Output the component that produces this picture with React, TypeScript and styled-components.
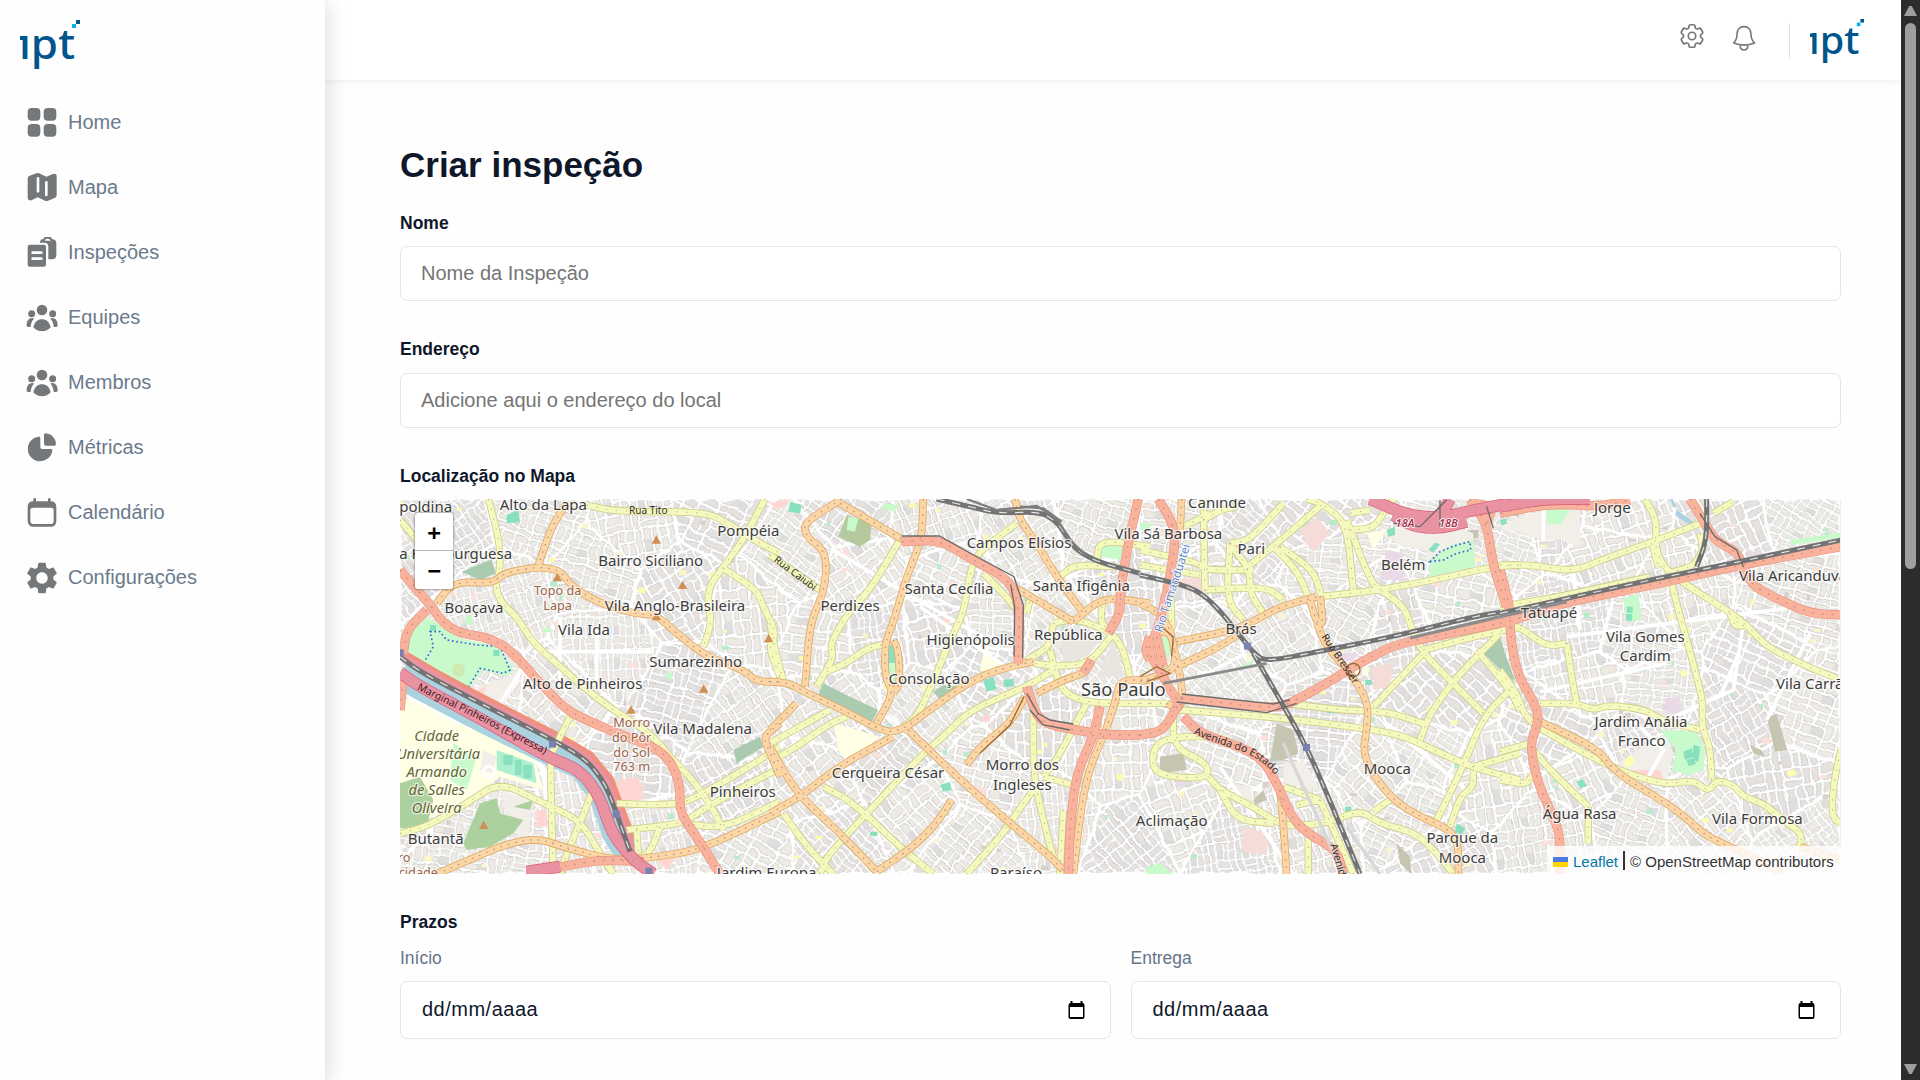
import React from "react";
import styled, { createGlobalStyle } from "styled-components";
import { HiOutlineCog6Tooth } from "react-icons/hi2";
import { MdSettings } from "react-icons/md";

const GlobalStyle = createGlobalStyle`
  * { box-sizing: border-box; }
  body { margin: 0; overflow: hidden; background: #fefefe; font-family: "Liberation Sans", Arial, sans-serif; }
`;

const Page = styled.div`
  display: flex;
  height: 1080px;
  width: 1920px;
  background: #fefefe;
`;
const Sidebar = styled.aside`
  flex: 0 0 325px;
  z-index: 2;
  background: #fefefe;
  box-shadow: 0 4px 22px rgba(0, 0, 0, 0.17);
`;
const SidebarLogo = styled.div`
  height: 90px;
  padding: 20px 0 0 20px;
`;
const Nav = styled.nav`
  display: flex;
  flex-direction: column;
`;
const NavItem = styled.a`
  display: flex;
  align-items: center;
  height: 65px;
  padding-left: 26px;
  gap: 10px;
  font-size: 20px;
  color: #6b7a8c;
`;
const IconBox = styled.span`
  display: flex;
  align-items: center;
  justify-content: center;
  width: 32px;
  height: 32px;
  color: #75787b;
  svg { flex: none; display: block; }
`;
const Column = styled.div`
  flex: 1;
  display: flex;
  flex-direction: column;
  min-width: 0;
`;
const Header = styled.header`
  flex: 0 0 80px;
  display: flex;
  justify-content: flex-end;
  padding-right: 37px;
  background: #fff;
  color: #75787b;
  box-shadow: 0 1px 6px rgba(0, 0, 0, 0.08);
`;
const HeaderIcon = styled.span<{ $top: number; $gap: number }>`
  padding-top: ${(p) => p.$top}px;
  margin-right: ${(p) => p.$gap}px;
  height: 60px;
  svg { display: block; }
`;
const Divider = styled.span`
  width: 1px;
  height: 35px;
  margin: 23px 20px 0 0;
  background: #dfe3e8;
`;
const HeaderLogo = styled.span`
  padding-top: 19px;
`;
const Main = styled.main`
  flex: 1;
  padding: 65px 60px 0 75px;
`;
const Title = styled.h1`
  margin: 0 0 28px;
  font-size: 35px;
  line-height: 40px;
  font-weight: 700;
  color: #0f172a;
`;
const Field = styled.div<{ $after: number; $gap?: number }>`
  display: flex;
  flex-direction: column;
  gap: ${(p) => p.$gap ?? 13}px;
  margin-bottom: ${(p) => p.$after}px;
`;
const Label = styled.label<{ $muted?: boolean }>`
  font-size: 17.5px;
  line-height: 20px;
  font-weight: ${(p) => (p.$muted ? 400 : 700)};
  color: ${(p) => (p.$muted ? "#64748b" : "#0f172a")};
`;
const TextInput = styled.input`
  width: 100%;
  height: 55px;
  padding: 0 20px;
  border: 1px solid #e2e5ec;
  border-radius: 7px;
  background: #fff;
  font: 20px "Liberation Sans", Arial, sans-serif;
  outline: none;
  &::placeholder { color: #757575; opacity: 1; }
`;
const Dates = styled.div`
  display: grid;
  grid-template-columns: 1fr 1fr;
  gap: 20px;
  margin-top: 16px;
`;
const DateBox = styled.div`
  display: flex;
  align-items: center;
  justify-content: space-between;
  height: 58px;
  padding: 0 25px 0 21px;
  border: 1px solid #e2e5ec;
  border-radius: 7px;
  background: #fff;
  font-size: 20px;
  color: #0f172a;
`;
const DateText = styled.span`
  padding-bottom: 2px;
  letter-spacing: 0.5px;
`;
const MapFrame = styled.div`
  position: relative;
  height: 375px;
  overflow: hidden;
  background: #f2efe9;
  & > svg { display: block; }
`;
const ZoomControl = styled.div`
  position: absolute;
  left: 15px;
  top: 14px;
  width: 38px;
  border-radius: 3px;
  overflow: hidden;
  background: #fff;
  box-shadow: 0 0 2px 1px rgba(0, 0, 0, 0.3);
`;
const ZoomButton = styled.div<{ $line?: boolean }>`
  display: flex;
  align-items: center;
  justify-content: center;
  height: 38px;
  padding-top: 1px;
  border-bottom: ${(p) => (p.$line ? "1px solid #bbb" : "0")};
  font: bold 22px "DejaVu Sans Mono", monospace;
  color: #000;
`;
const Attribution = styled.div`
  position: absolute;
  right: 0;
  bottom: 0;
  width: 294px;
  height: 28px;
  display: flex;
  align-items: center;
  padding-left: 6px;
  background: rgba(255, 255, 255, 0.8);
  font-size: 15px;
  color: #333;
  white-space: nowrap;
`;
const LeafletLink = styled.a`
  margin: 3px 0 0 5px;
  color: #0078a8;
`;
const Credit = styled.span`
  margin-top: 3px;
`;
const Bar = styled.span`
  width: 2px;
  height: 19px;
  margin: 0 5px 0 5px;
  background: #333;
`;
const Flag = styled.span`
  width: 15px;
  height: 10px;
  margin-top: 3px;
  background: linear-gradient(#4c7be1 50%, #ffd500 50%);
`;
const Scrollbar = styled.div`
  flex: 0 0 19px;
  z-index: 3;
  display: flex;
  flex-direction: column;
  align-items: center;
  padding: 6px 0;
  background: #2c2c2c;
`;
const Arrow = styled.span<{ $down?: boolean }>`
  width: 13px;
  height: 10px;
  background: #9f9f9f;
  clip-path: ${(p) => (p.$down ? "polygon(0 0, 100% 0, 60% 100%, 40% 100%)" : "polygon(40% 0, 60% 0, 100% 100%, 0 100%)")};
`;
const Thumb = styled.span`
  width: 11px;
  height: 546px;
  margin: 7px 0 auto;
  border-radius: 6px;
  background: #9f9f9f;
`;
const LogoSvg = styled.svg`
  display: block;
  overflow: visible;
`;

function Logo({ width }: { width: number }) {
  return (
    <LogoSvg width={width} height={(width * 46) / 60} viewBox="0 0 60 46">
      <g fill="#00558c">
        <text transform="translate(-1 38.7) scale(1 0.96)" fontFamily="Noto Sans, sans-serif" fontSize="43" fontWeight="500" textLength="56" lengthAdjust="spacingAndGlyphs">ıpt</text>
        <rect x="0" y="16" width="6" height="4" />
        <rect x="56" y="0" width="4" height="4" />
      </g>
      <rect x="52" y="4" width="4" height="4" fill="#00b5e2" />
    </LogoSvg>
  );
}

const NavGlyph = ({ y, children }: { y: number; children: React.ReactNode }) => (
  <svg width="32" height="32" viewBox={`79 ${y} 96 96`} fill="currentColor">{children}</svg>
);

const People = () => (
  <NavGlyph y={34}>
    <circle cx="127" cy="58" r="16" />
    <circle cx="96" cy="69" r="10.5" />
    <circle cx="159" cy="69" r="10.5" />
    <path d="M101 110C105 93 115 86 127 86s22 7 26 24c-7 8-16 12-26 12s-19-4-26-12z" />
    <path d="M81 107c-1-16 6-25 17-25 3 0 5 1 4 3-5 6-8 13-9 23-1 2-11 1-12-1z" />
    <path d="M174 107c1-16-6-25-17-25-3 0-5 1-4 3 5 6 8 13 9 23 1 2 11 1 12-1z" />
  </NavGlyph>
);

const navItems = [
  {
    label: "Home",
    icon: (
      <NavGlyph y={318}>
        {[[84, 321], [132, 321], [84, 369], [132, 369]].map(([x, y]) => <rect key={`${x}${y}`} x={x} y={y} width="38" height="38" rx="12" />)}
      </NavGlyph>
    ),
  },
  {
    label: "Mapa",
    icon: (
      <NavGlyph y={514}>
        <path fillRule="evenodd" d="M84 533q0-6 6-8l20-7q4-2 8 0l22 10 20-8q11-3 11 6v58q0 6-6 8l-20 8q-5 2-9 0l-22-10-19 9q-11 2-11-7zM111 533v39q0 4 4 4t4-4v-39q0-4-4-4t-4 4zM136 545v38q0 4 4 4t4-4v-38q0-4-4-4t-4 4z" />
      </NavGlyph>
    ),
  },
  {
    label: "Inspeções",
    icon: (
      <NavGlyph y={709}>
        <path fillRule="evenodd" d="M90 732h43q6 0 6 6v54q0 6-6 6H90q-6 0-6-6v-54q0-6 6-6zM99 752q-4 0-4 4t4 4h26q4 0 4-4t-4-4zM99 770q-4 0-4 4t4 4h26q4 0 4-4t-4-4z" />
        <path fillRule="evenodd" d="M120 726q2-10 11-11 2-7 9-7h8q7 0 9 7 13 1 13 13v35q0 13-13 13h-11v-38q0-12-12-12zM136 720h17q-2-6-6-6h-6q-4 0-5 6z" />
      </NavGlyph>
    ),
  },
  { label: "Equipes", icon: <People /> },
  { label: "Membros", icon: <People /> },
  {
    label: "Métricas",
    icon: (
      <NavGlyph y={424}>
        <path d="M117 438q5-1 5 5v27q0 5 5 5h27q5 0 4 6a37 37 0 1 1-41-43zM133 433q0-5 5-5 28 3 31 32 0 5-5 5h-26q-5 0-5-5z" />
      </NavGlyph>
    ),
  },
  {
    label: "Calendário",
    icon: (
      <NavGlyph y={619}>
        <path fillRule="evenodd" d="M101 625q0-3 4-3t4 3v7h36v-7q0-3 4-3t4 3v7q17 0 17 17v41q0 18-17 18h-51q-18 0-18-18v-41q0-17 17-17zM92 658v32q0 10 10 10h51q9 0 9-10v-32q0-7-9-7h-51q-10 0-10 7z" />
      </NavGlyph>
    ),
  },
  { label: "Configurações", icon: <MdSettings size={38} /> },
];

function Bell() {
  return (
    <svg width="24" height="27" viewBox="336 74 72 81" fill="none" stroke="#75787b" strokeWidth="4.8" strokeLinejoin="round">
      <path d="M372 79c-13 0-21 10-21 23 0 12-3 19-10 26 20 8 43 8 63 0-8-7-11-14-11-26 0-13-8-23-21-23z" />
      <path d="M360 135q1 14 12 14t12-14" />
    </svg>
  );
}

function CalendarMark() {
  return (
    <svg width="17" height="19" viewBox="0 0 17 19">
      <path fillRule="evenodd" d="M2.5 0h2v2h8V0h2v2q2 0 2 2v12q0 2-2 2h-12q-2 0-2-2V4q0-2 2-2zM2 6v10h13V6z" />
    </svg>
  );
}

/* The map is drawn at three units per pixel, in four sheets laid side by side. */
type Sheet = { dx: number; areas: [string, string][]; yellow: string; orange: string; trunk: string; motorway: string; rail: string };
const sheets: Sheet[] = [
  {
    dx: 0,
    areas: [
      ["#c8facc", "M20 430L80 380 130 410 180 445 300 470 340 540 320 560 250 540 200 605 100 560 30 510Z"],
      ["#cdebb0", "M155 540a20 20 0 1 0 40 0a20 20 0 1 0-40 0"],
      ["#aacbaf", "M185 245L275 208 287 250 240 270ZM1000 780L1080 740 1090 770 1010 820Z"],
      ["#ffffe5", "M0 640L40 620 150 680 400 790 430 900 300 860 200 940 0 1020Z"],
      ["#c8facc", "M160 760L230 800 200 900 150 870Z"],
      ["#f2efe9", "M200 600L330 560 380 520 300 660 220 640ZM250 780L290 800 280 850 240 840ZM300 900L400 930 380 1060 330 1000Z"],
      ["#add19e", "M0 880L60 860 100 930 80 1010 0 1015ZM190 1060L240 940 290 925 300 970 370 990 340 1030 270 1070 200 1080ZM340 950L400 930 390 960Z"],
      ["#aef0cf", "M290 780L400 820 410 880 290 840Z"],
      ["#88e0be", "M310 795h28v30h-28zM345 810h20v45h-20zM370 825h25v40h-25zM90 405h18v18h-18zM280 480h18v18h-18zM320 75l35-15 5 35-40 5z"],
      ["#ffd6d1", "M655 870L710 860 730 890 725 930 650 930ZM220 610L260 585 250 620ZM410 960h30v50h-30zM770 1110L830 1100 800 1140Z"],
      ["#c8facc", "M195 380l20-5 5 25-20 5zM790 560l25-20v30zM430 415h25v12h-25z"],
    ],
    yellow: "M265 27L285 100 300 170 300 240 285 290 305 340 350 380 400 460 470 520 560 600 640 660 720 710 770 750 810 800 860 850 900 900 940 960 970 1020M0 90L60 160M560 45L650 65 920 65 1000 110 1080 160 1140 190M1095 27L1030 150 970 230 920 300 935 400 910 470M970 235L1070 300 1085 340 1130 430 1105 470 1140 560M0 1030L80 1010 200 940 300 875 430 940 540 990 600 1090 640 1152M510 680L460 780 450 800 460 1152M575 910L540 1000 500 1090 480 1152M650 940L760 945 850 940 930 900 1080 810 1140 770M680 1020L850 1000 890 970 1010 900 1140 835M710 1020L715 1090M780 1010L750 1090 700 1110M850 1000L970 1015 1140 935",
    orange: "M500 40L455 110 415 225M110 340L160 275 280 280 310 250 410 230 480 240 515 290 600 340 700 370 770 375 830 430 920 500 1030 540 1070 575 1140 575M1140 700L1090 740 1110 790 1140 860M110 1152L380 1035 520 1080 640 1110 740 1105 900 1080 1140 965",
    trunk: "M0 240L60 310 95 350 130 400 180 430 250 440 310 465 360 510 420 580 500 660 560 690 650 730 760 770 810 810 840 880 840 970 890 1040 960 1152M80 360L20 420 10 490M0 660L10 560M380 1152L560 1115 640 1110 730 1115",
    motorway: "M0 548L60 590 250 690 440 800 540 840 600 920 635 1030 700 1110 760 1152M380 1145L480 1130",
    rail: "M0 500L60 545 250 645 460 750 560 810 615 880 650 970 690 1085",
  },
  {
    dx: 1110,
    areas: [
      ["#b5c99e", "M230 75L305 100 300 150 270 170 205 140Z"],
      ["#88e0be", "M60 35L95 45 90 70 55 65ZM355 465h20v55h-20zM200 732h14v20h-14zM510 885l30-10 5 25-25 5zM300 1025h22v12h-22z"],
      ["#c8facc", "M355 520h20v80l-20-30zM990 160L1060 165 1055 210 990 200ZM235 80l30 5-10 40-25-5zM340 40l45 5-10 20-40-8z"],
      ["#aacbaf", "M160 580L240 620 325 660 305 695 140 625ZM490 605L520 585 575 590 510 630Z"],
      ["#ffffe5", "M190 700L330 740 240 815 205 780ZM640 490L690 520 650 550 630 540Z"],
      ["#ffd6d1", "M510 390l25-15 15 10-25 25zM640 675h20v20h-20zM850 1070h15v20h-15zM0 40L50 27 55 40 20 60Z"],
      ["#88e0be", "M640 570l30-8 10 35-30 8zM700 570l30-4 3 22-30 4z"],
      ["#e9e6df", "M985 560L1030 440 1060 560ZM870 430L1000 440 950 500 880 520Z"],
    ],
    yellow: "M0 195L150 300M390 150L300 300 240 360 180 460 190 500 170 540 140 590M170 545L230 520 290 475 345 462M0 400L20 500 40 570M740 100L620 190 600 250 580 370 550 430 520 500 480 600 440 680 400 710M0 815L80 770 180 700 230 680M0 760L180 660M40 970L110 1070 190 1152M150 1152L170 1100 290 970 460 790 520 740 600 660 770 590 850 540M160 890L220 920 290 975 400 1080 490 1152M590 1152L700 1030 760 940 790 900M640 250L710 320 740 360M790 640L790 860 830 1030 850 1100M950 640L860 810 820 860M820 860L910 885M880 960L870 1152M870 260L910 225 1040 230M980 210L990 150 1140 170M1000 320L990 400 1030 430M1030 430L960 520 870 530 790 520M840 480L870 600 950 640 1140 640M850 400L920 385 1030 430 1060 480 1080 560M770 510L840 470 850 400M770 370L780 330",
    orange: "M215 27L100 100 110 140 160 180 170 230 160 310 120 400 105 590M210 40L400 150M460 27L455 150 410 260 390 330 365 410 345 460 345 560 370 610 320 700M370 450L385 480 390 580 370 610M0 575L60 580 110 610 200 650 350 730 400 715 425 700 560 600 650 550 740 525 790 515M415 720L560 860 720 1000 830 1090 880 1140M0 720L80 640M0 970L90 920 220 820 370 740M0 770L80 910 200 1020 320 1145M320 1145L430 1070 500 1000 545 930M735 27L750 90 800 160 860 260 940 370M740 295L910 395M910 395L1000 320 1140 340M590 825L630 770 720 700 765 620M800 610L880 570 940 550 960 520M1140 570L1050 570 1035 640 1000 740 960 830 935 940 910 1152",
    trunk: "M395 155L510 150 600 205 720 270 748 350 745 520M1105 27L1070 180 1050 320 1050 370 1015 430M965 510L940 550M770 590L800 680 840 705 910 718 1000 735 1110 735M990 650L970 740 920 850 900 1000 895 1152M1140 440L1125 480 1140 510",
    motorway: "",
    rail: "M500 27L600 50 680 70 810 65 860 95 890 140 920 180 980 215 1110 250",
  },
  {
    dx: 2220,
    areas: [
      ["#c5c5b2", "M410 700L460 720 475 790 430 810 390 815ZM60 800L130 790 140 840 60 850ZM770 1060L810 1100 815 1152 780 1120ZM340 930L370 900 380 930 345 945ZM985 120h30v25h-30z"],
      ["#f2efe9", "M720 130L860 80 1000 130 1000 150 860 210 860 180 790 170ZM430 820L490 810 540 900 430 880ZM250 920L330 880 340 940Z"],
      ["#c8facc", "M870 210L930 165 1000 150 1005 230 870 260ZM300 530L340 510 335 530ZM65 440h25v60H65zM0 100h30v20H0zM20 1130L60 1120 100 1152H20Z"],
      ["#aacbaf", "M1030 490L1080 440 1120 575Z"],
      ["#f5dcd9", "M480 120L530 80 570 130 520 185ZM310 1010L385 1030 380 1095 305 1085ZM100 270L180 260 210 310 130 300ZM700 530L760 520 750 590 700 600Z"],
      ["#ead9e6", "M740 180L790 190 790 270 720 270ZM600 490L650 490 640 510 600 520ZM110 860h25v30h-25z"],
      ["#ffffe5", "M680 130L740 120 700 180ZM670 525L690 535 680 560 665 550Z"],
      ["#88e0be", "M740 120L765 110 765 135 745 140ZM865 180l20-22 15 5-20 25zM676 570h20v14h-20zM560 655h30v14h-30zM615 950h18v18h-18zM1080 90l20-5v22h-15zM950 1000l25 15-10 20-20-10z"],
    ],
    yellow: "M0 180L180 220 190 240 340 240M0 225L180 255M190 27L195 300M195 300L380 290 430 330M190 90L240 60 290 50M270 160L260 330 310 390M270 160L330 240 330 310 370 370M270 160L330 150 430 40M130 110L210 70M310 240L400 170 550 40M400 170L460 230 490 280 510 340M420 170L520 240 545 320M540 320L720 300 880 270 1060 230 1140 225M500 27L545 40 620 100 640 300M620 90L690 270 720 300 780 340 800 370 820 430 850 490 930 570 1030 670M625 120L700 115 730 70 760 27M630 70L690 60M850 480L1000 440 1140 410M1080 430L950 560 870 670 840 750M700 650L850 490M1010 480L1110 600 1140 660M1110 600L1030 680 960 850 890 990M120 660L380 680 560 700 770 730 860 770 990 830 1140 870M440 640L600 660 740 665 850 700M0 640L80 640M100 660L100 770 200 820 205 860 130 865 50 850 35 810 50 760 110 740 200 740M205 860L240 900 340 950 430 1010 560 1000 660 960 720 1000 830 1030 900 1100 940 1152M240 900L290 990 400 1000M430 890L540 930M540 930L590 1040 640 1152M540 930L470 945M505 1040L505 1152M1000 830L1140 790M1000 840L1000 890 960 920 930 1010M700 965L750 930M90 240L95 420",
    orange: "M125 27L120 120M0 340L60 370 90 420M110 455L260 425 330 400 420 350 530 320M540 318L550 400 530 400 510 330M110 530L250 465 340 400M530 400L560 470 640 560 685 640 680 720 670 780 690 840 750 920 820 970 930 1020 955 1060 955 1152M0 575L60 555 110 530 95 430 60 425M420 900L430 1000 440 1152M80 640L120 660 130 600 90 420",
    trunk: "M55 27L110 120 90 270 50 430 20 480 60 540 90 600 120 640M50 440L70 530M0 735L60 725 90 690 125 625M125 625L400 655 450 640 560 580 640 530 760 465 880 440 1080 400M130 680L180 730 300 770 370 810 410 880 460 990 510 1035 590 1080 610 1152M990 27L1040 100 1060 230 1100 350M1040 100L1060 50 1000 40",
    motorway: "M690 27L800 75 900 85 1000 60 1100 42M760 75L820 110 900 115 980 95M870 100L900 80 930 27",
    rail: "M0 255L150 290 210 330 280 410 340 490 380 515 560 480 760 440 1000 380 1080 367M340 490L420 630 500 770 590 980 660 1152",
  },
  {
    dx: 3300,
    areas: [
      ["#f2efe9", "M0 110L60 80 130 60 130 40 240 50 240 170 180 150 130 150 60 130ZM340 830L430 770 500 730 520 790 500 870 400 860Z"],
      ["#c8facc", "M370 325L415 310 425 390 380 395ZM480 720L590 725 615 780 610 840 560 855 515 840 530 780ZM870 150L1020 128 1020 143 875 165ZM140 40L210 60 180 105 140 100Z"],
      ["#88e0be", "M380 350h18v18h-18zM378 372h18v20h-18zM550 785l25-10 5 25-25 10zM580 765l20 5-5 45-18-5zM560 810l20-6 8 18-22 6zM230 875l18-8 12 20-20 8z"],
      ["#ead9e6", "M495 625L540 620 545 675 500 670ZM740 175L780 195 750 205Z"],
      ["#c5c5b2", "M800 680L830 673 862 780 825 785ZM750 765L785 780 795 802 760 790Z"],
      ["#aacbaf", "M0 450L45 570 0 550Z"],
      ["#aad3df", "M530 60L580 95 570 105 525 75ZM510 27h8l12 25h-10z"],
      ["#ffffb0", "M370 820L390 795 405 810 385 835ZM860 845l20-8 12 15-25 10zM540 545l18-5 5 15-18 5z"],
      ["#ffd6d1", "M400 840L480 840 490 870 400 850Z"],
    ],
    yellow: "M0 225L100 225 220 245 330 200 460 155 600 100M435 27L470 90 465 170 490 230 550 280 680 360 740 405 800 470 900 520 1010 565M455 160L475 230M515 280L540 380 580 520 610 640 605 710 630 770 635 870M0 350L180 320 450 260M600 130L610 180 580 230 500 250M640 70L700 35M0 410L60 410 140 470 200 460M200 460L215 560 230 640M120 640L230 640 280 660 330 645 440 660 480 690 600 720M0 540L50 610 80 690 180 750 340 835 490 885 580 870 625 905 650 870 700 885 730 920 790 940 850 990 905 1030 900 1070M0 870L80 885 100 850M100 780L150 840 265 950M265 950L265 1060M1023 780L1000 880 995 980 1023 1000M0 785L90 760M690 370L705 410 740 405",
    orange: "M120 695L290 775 350 850 500 940 560 985 620 1040 780 1110 850 1152M900 1070L1023 1110",
    trunk: "M570 27L620 110 650 155 710 185 735 240 760 290 850 335 930 370 1023 375M0 400L60 385 180 340 460 285 720 225 1023 170M0 240L30 350 30 430 50 550 110 650 115 700 90 760 110 870 150 960 180 1030 180 1152M0 70L150 40 300 50 390 30",
    motorway: "M0 50L130 27 270 27",
    rail: "M0 370L200 325 450 270 730 213 1023 150M620 27L620 150 590 230",
  },
];

/* Rounds the corners of a polyline path by passing curves through its segment midpoints. */
function smooth(d: string): string {
  return d
    .split("M")
    .filter(Boolean)
    .map((part) => {
      const n = (part.match(/-?\d+/g) || []).map(Number);
      const p: [number, number][] = [];
      for (let i = 0; i + 1 < n.length; i += 2) p.push([n[i], n[i + 1]]);
      let out = `M${p[0]}`;
      for (let i = 1; i < p.length - 1; i++) {
        const [a, b, c] = [p[i - 1], p[i], p[i + 1]];
        out += `L${b[0] + (a[0] - b[0]) * 0.45} ${b[1] + (a[1] - b[1]) * 0.45}Q${b} ${b[0] + (c[0] - b[0]) * 0.45} ${b[1] + (c[1] - b[1]) * 0.45}`;
      }
      return out + `L${p[p.length - 1]}`;
    })
    .join("");
}

/* Street neighbourhoods: centre x, centre y, grid angle. */
const hoods: [number, number, number][] = [
  [120, 120, 55], [420, 60, 20], [700, 120, 80], [950, 60, 25], [300, 330, 70], [600, 240, 15], [830, 300, 60], [1050, 350, 85],
  [620, 480, 88], [850, 620, 15], [250, 600, 28], [480, 620, 45], [100, 780, 28], [330, 1000, 10], [520, 960, 80], [700, 820, 5],
  [750, 1050, 75], [1000, 700, 55], [980, 900, 60], [1050, 1070, 30], [1180, 200, 35], [1350, 60, 35], [1380, 260, 55], [1280, 450, 10],
  [1420, 450, 80], [1600, 100, 70], [1650, 260, 25], [1620, 430, 75], [1780, 380, 2], [1880, 130, 60], [1750, 560, 30], [1300, 650, 55],
  [1580, 640, 45], [1450, 800, 45], [1550, 960, 48], [1250, 880, 50], [1300, 1060, 45], [1700, 1080, 40], [1780, 850, 15], [1900, 720, 88],
  [2000, 420, 50], [2080, 120, 20], [2160, 300, 85], [2110, 820, 88], [1980, 980, 85], [2180, 1050, 50], [2350, 120, 5], [2400, 250, 85],
  [2560, 160, 42], [2620, 420, 55], [2420, 440, 30], [2700, 80, 38], [2760, 240, 5], [2850, 370, 30], [3000, 420, 75], [3160, 350, 12],
  [2500, 620, 50], [2720, 740, 5], [2450, 770, 20], [2350, 960, 70], [2500, 1050, 80], [2720, 1000, 75], [2920, 850, 45], [3120, 620, 45],
  [3080, 790, 30], [3040, 980, 25], [3120, 1080, 65], [3240, 870, 80], [3300, 130, 20], [3480, 80, 85], [3620, 60, 70], [3600, 180, 70],
  [3530, 400, 80], [3700, 440, 12], [3830, 320, 78], [4020, 100, 65], [4180, 70, 30], [4180, 320, 15], [4080, 500, 25], [3580, 590, 78],
  [3760, 600, 5], [4000, 680, 60], [4220, 650, 20], [3560, 850, 65], [3720, 760, 70], [3700, 980, 20], [3900, 980, 50], [4130, 900, 80],
  [4220, 1050, 55], [3440, 1050, 80], [3480, 730, 25],
];

function cellOf(index: number): string {
  let poly: [number, number][] = [[0, 27], [4320, 27], [4320, 1152], [0, 1152]];
  const [ax, ay] = hoods[index];
  hoods.forEach(([bx, by], j) => {
    if (j === index) return;
    const side = (p: [number, number]) => (p[0] - (ax + bx) / 2) * (bx - ax) + (p[1] - (ay + by) / 2) * (by - ay);
    const next: [number, number][] = [];
    poly.forEach((p, k) => {
      const q = poly[(k + 1) % poly.length];
      const sp = side(p);
      const sq = side(q);
      if (sp <= 0) next.push(p);
      if (sp * sq < 0) {
        const t = sp / (sp - sq);
        next.push([p[0] + (q[0] - p[0]) * t, p[1] + (q[1] - p[1]) * t]);
      }
    });
    poly = next;
  });
  return poly.map((p) => p.map(Math.round).join(",")).join(" ");
}

const streetLines = "M0 0H150M0 30H150M0 57H90M0 92H150M0 0V120M42 0V57M90 0V120M124 30V92M0 120H150M150 0V120";

const labels: [string, number, number, ("city" | "peak" | "uni")?][] = [
  ["poldina", 77, 65], ["Alto da Lapa", 430, 61], ["a Hamburguesa", 167, 206], ["Pompéia", 1045, 137], ["Bairro Siciliano", 752, 227],
  ["Boaçava", 222, 369], ["Vila Anglo-Brasileira", 825, 364], ["Vila Ida", 552, 435], ["Sumarezinho", 887, 532], ["Alto de Pinheiros", 548, 597],
  ["Vila Madalena", 908, 731], ["Pinheiros", 1028, 922], ["Butantã", 107, 1061], ["Jardim Europa", 1100, 1163],
  ["Topo da", 473, 316, "peak"], ["Lapa", 473, 361, "peak"], ["Morro", 695, 710, "peak"], ["do Pôr", 695, 755, "peak"], ["do Sol", 695, 800, "peak"], ["763 m", 695, 844, "peak"],
  ["ro", 12, 1116, "peak"], ["cidade", 55, 1160, "peak"],
  ["Cidade", 110, 754, "uni"], ["Universitária", 115, 808, "uni"], ["Armando", 110, 862, "uni"], ["de Salles", 110, 915, "uni"], ["Oliveira", 110, 968, "uni"],
  ["Campos Elísios", 1857, 173], ["Santa Cecília", 1647, 313], ["Perdizes", 1350, 362], ["Higienópolis", 1712, 464], ["República", 2005, 451], ["Santa Ifigênia", 2044, 304],
  ["Consolação", 1587, 582], ["São Paulo", 2170, 618, "city"], ["Cerqueira César", 1464, 864], ["Morro dos", 1867, 841], ["Ingleses", 1867, 900], ["Paraíso", 1848, 1163],
  ["Vila Sá Barbosa", 2305, 148], ["Canindé", 2451, 53], ["Pari", 2554, 193], ["Belém", 3010, 240], ["Brás", 2523, 432], ["Mooca", 2962, 853], ["Aclimação", 2315, 1007],
  ["Parque da", 3187, 1060], ["Mooca", 3187, 1118], ["Jorge", 3637, 69], ["Tatuapé", 3447, 384], ["Vila Gomes", 3736, 456], ["Cardim", 3736, 514], ["Vila Aricanduva", 4179, 274],
  ["Vila Carrão", 4243, 597], ["Jardim Anália", 3723, 711], ["Franco", 3725, 769], ["Água Rasa", 3539, 987], ["Vila Formosa", 4072, 1001],
];

const peaks = [[769, 150], [472, 263], [848, 286], [769, 380], [1106, 446], [911, 597], [693, 660], [251, 1006]];
const stations = [[457, 762], [648, 972], [746, 1143], [0, 488], [2542, 468], [2719, 772]];
const speckles = Array.from({ length: 260 }, (_, i) => [(i * 1597 + ((i * i * 31) % 211)) % 4320, 30 + ((i * 733 + ((i * i * 17) % 97)) % 1120), i % 5]);
const speckleColors = ["#fdfbb0", "#b8ecc8", "#ffe0d8", "#d9d0c9", "#fbf7c8"];

function Roads({ kind, color, width, dots }: { kind: "yellow" | "orange" | "trunk" | "motorway" | "rail"; color: string; width: number; dots?: string }) {
  return (
    <g fill="none" stroke={color} strokeWidth={width} strokeLinejoin="round" strokeDasharray={dots}>
      {sheets.map((s) => <path key={s.dx} d={smooth(s[kind])} transform={`translate(${s.dx} 0)`} />)}
    </g>
  );
}

function CityMap() {
  return (
    <svg width="1440" height="375" viewBox="0 27 4320 1125">
      <defs>
        {hoods.map(([x, y, a], i) => (
          <pattern key={i} id={`hood${i}`} width="150" height="120" patternUnits="userSpaceOnUse" patternTransform={`translate(${x} ${y}) rotate(${a}) scale(${0.66 + (i % 4) * 0.09})`}>
            <rect width="150" height="120" fill={i % 3 ? "#eeebe5" : "#e5e2e0"} />
            <rect x="42" y="57" width="48" height="35" fill="#e0dedc" />
            <g fill="none">
              <path d={streetLines} stroke="#c9c7c6" strokeWidth="13" />
              <path d={streetLines} stroke="#fff" strokeWidth="8.5" />
            </g>
          </pattern>
        ))}
        <filter id="wander" x="0" y="0" width="100%" height="100%">
          <feTurbulence type="fractalNoise" baseFrequency="0.025" numOctaves="2" seed="4" />
          <feDisplacementMap in="SourceGraphic" scale="18" xChannelSelector="R" yChannelSelector="G" />
        </filter>
        <path id="marginal" d="M50 598L230 686 460 806" />
        <path id="estado" d="M2380 732Q2480 770 2520 782Q2590 810 2620 850" />
      </defs>
      <rect y="27" width="4320" height="1125" fill="#ebe8e3" />
      <g filter="url(#wander)">
        {hoods.map((_, i) => <polygon key={i} points={cellOf(i)} fill={`url(#hood${i})`} stroke="#fff" strokeWidth="8" />)}
      </g>
      {speckles.map(([x, y, c], i) => <rect key={i} x={x} y={y} width={9 + (i % 4) * 4} height={9 + (i % 3) * 4} fill={speckleColors[c]} />)}
      {sheets.map((s) => (
        <g key={s.dx} transform={`translate(${s.dx} 0)`}>
          {s.areas.map(([fill, d]) => <path key={d} d={d} fill={fill} />)}
        </g>
      ))}
      <g fill="none" stroke="#3a62e0" strokeWidth="5" strokeDasharray="5 8">
        <path d="M90 425L120 425 140 450 230 465 300 470 330 540 310 550 240 535 200 600 150 580 70 520 100 470Z" />
        <path d="M3090 215L3120 185 3170 165 3210 155 3212 180 3170 190 3130 210Z" />
      </g>
      <g fill="none" stroke="#fff">
        <path strokeWidth="18" d="M0 600L150 680 400 790 435 850 440 930" />
        <path strokeWidth="11" d="M400 485H760M480 380V600M590 420V600M300 640L370 530M2460 830L2680 1152M1960 27L1990 210M4100 690L4230 430M3960 620L4020 480M3430 40V150M3520 250L3540 420M3500 440L4160 355M3420 605L3800 520M3800 690L4000 600 4030 400M3740 870L3790 780 3700 690M1300 180L1500 300 1800 470M1560 350L1860 560M2960 700L3200 900M4150 200L4320 150" />
        <circle cx="267" cy="845" r="16" strokeWidth="9" />
      </g>
      <g fill="none" strokeLinejoin="round">
        <path stroke="#aad3df" strokeWidth="78" d="M0 555L60 590 250 690 445 785 545 830 605 910 645 1030 690 1100" />
        <path stroke="#f0907c" strokeWidth="24" d="M0 486L120 556 250 626 460 732 568 794 630 868 668 970 708 1080" />
        <path stroke="#e892a2" strokeWidth="15" d="M0 492L120 564 250 634 460 740 563 800 623 872 660 970 703 1080" />
      </g>
      <Roads kind="yellow" color="#cbce8e" width={22} />
      <Roads kind="yellow" color="#f6f9bd" width={17} />
      <Roads kind="orange" color="#dcab6c" width={23} />
      <Roads kind="orange" color="#fcd6a4" width={18} />
      <Roads kind="trunk" color="#ea9580" width={28} />
      <Roads kind="trunk" color="#f9b29c" width={24} />
      <Roads kind="motorway" color="#dc5778" width={36} />
      <Roads kind="motorway" color="#e892a2" width={32} />
      <Roads kind="yellow" color="#b9a98f" width={3} dots="4 26" />
      <Roads kind="orange" color="#b79a92" width={4} dots="5 18" />
      <Roads kind="trunk" color="#c88b86" width={4} dots="5 24" />
      <Roads kind="rail" color="#737373" width={15} />
      <Roads kind="rail" color="#e4e4e4" width={3.5} dots="24 24" />
      <g fill="none" stroke="#6b6b6b">
        <path strokeWidth="8" stroke="#8b8b8b" d="M2290 580L2600 520" />
        <path strokeWidth="7" stroke="#7d7d7d" d="M1700 27L1790 60 1910 48 1970 85 2010 150 2060 200M1860 50L1930 55 1985 95" />
        <path strokeWidth="4" d="M1505 138L1618 138 1715 192 1842 260 1870 345 1868 505M1832 284L1844 350 1842 500M1880 610L1914 670 1950 690 2020 702M1890 660L1930 705 2010 720M2345 612L2620 642 2670 630M2330 636L2600 668 2690 640M2980 100L3060 110 3140 30M3120 30V110M3260 50L3280 115M3900 70L3945 140 4010 180 4030 230" />
        <path strokeWidth="10" stroke="#8c8c8c" d="M3030 444L3300 380 3500 335" />
        <path strokeWidth="4" stroke="#9c6b35" d="M1740 790L1830 705 1872 620M2220 560L2270 530 2310 550 2240 575M2315 500L2320 440 2290 415M2840 540a20 20 0 1 0 40 0a20 20 0 1 0-40 0" />
        <path strokeWidth="10" stroke="#d8d8d8" d="M2650 760L2830 1152M2840 1010L2940 1152" />
      </g>
      {stations.map(([x, y]) => <rect key={x} x={x - 10} y={y - 10} width="21" height="21" fill="#7981b0" />)}
      {peaks.map(([x, y]) => <path key={`${x}-${y}`} d={`M${x} ${y - 14}l14 25h-28z`} fill="#d08f55" />)}
      <g fontFamily="Noto Sans, sans-serif" paintOrder="stroke" strokeLinejoin="round">
        {labels.map(([name, x, y, kind]) => (
          <text key={`${name}${x}${y}`} x={x} y={y} textAnchor="middle" fontSize={kind === "city" ? 55 : kind === "peak" ? 38 : kind === "uni" ? 44 : 45} fontStyle={kind === "uni" ? "italic" : "normal"} fill={kind === "peak" ? "#9b6447" : kind === "uni" ? "#66662e" : "#3d3d3d"} stroke="rgba(255,255,255,0.65)" strokeWidth="8">{name}</text>
        ))}
        <text x="745" y="71" fontSize="30" textAnchor="middle" fill="#333">Rua Tito</text>
        <text fontSize="30" textAnchor="middle" fill="#333" transform="translate(1180 258) rotate(37)">Rua Caiubi</text>
        <text fontSize="31" textAnchor="middle" fill="#333" transform="translate(2812 512) rotate(56)">Rua Bresser</text>
        <text fontSize="31" textAnchor="middle" fill="#333" transform="translate(2807 1120) rotate(74)">Avenida</text>
        <text fontSize="35" textAnchor="middle" fill="#5d87cc" stroke="#fff" strokeWidth="5" transform="translate(2328 298) rotate(-72)">Rio Tamanduateí</text>
        <text fontSize="31" fill="#431c28"><textPath href="#marginal">Marginal Pinheiros (Expressa)</textPath></text>
        <text fontSize="32" fill="#333"><textPath href="#estado">Avenida do Estado</textPath></text>
        <g fontSize="33" fontStyle="italic" fontWeight="600" fill="#a73250" stroke="#fff" strokeWidth="5" textAnchor="middle">
          <text x="3015" y="112">18A</text>
          <text x="3145" y="112">18B</text>
        </g>
      </g>
    </svg>
  );
}

export default function App() {
  return (
    <Page>
      <GlobalStyle />
      <Sidebar>
        <SidebarLogo><Logo width={60} /></SidebarLogo>
        <Nav>
          {navItems.map((item) => (
            <NavItem key={item.label}>
              <IconBox>{item.icon}</IconBox>
              {item.label}
            </NavItem>
          ))}
        </Nav>
      </Sidebar>
      <Column>
        <Header>
          <HeaderIcon $top={21} $gap={25}><HiOutlineCog6Tooth size={30} strokeWidth={1.35} /></HeaderIcon>
          <HeaderIcon $top={25} $gap={33}><Bell /></HeaderIcon>
          <Divider />
          <HeaderLogo><Logo width={54} /></HeaderLogo>
        </Header>
        <Main>
          <Title>Criar inspeção</Title>
          <Field $after={38}>
            <Label>Nome</Label>
            <TextInput placeholder="Nome da Inspeção" />
          </Field>
          <Field $after={38} $gap={14}>
            <Label>Endereço</Label>
            <TextInput placeholder="Adicione aqui o endereço do local" />
          </Field>
          <Field $after={38}>
            <Label>Localização no Mapa</Label>
            <MapFrame>
              <CityMap />
              <ZoomControl>
                <ZoomButton $line>+</ZoomButton>
                <ZoomButton>−</ZoomButton>
              </ZoomControl>
              <Attribution>
                <Flag />
                <LeafletLink>Leaflet</LeafletLink>
                <Bar />
                <Credit>© OpenStreetMap contributors</Credit>
              </Attribution>
            </MapFrame>
          </Field>
          <Label>Prazos</Label>
          <Dates>
            {["Início", "Entrega"].map((name) => (
              <Field key={name} $after={0}>
                <Label $muted>{name}</Label>
                <DateBox><DateText>dd/mm/aaaa</DateText><CalendarMark /></DateBox>
              </Field>
            ))}
          </Dates>
        </Main>
      </Column>
      <Scrollbar>
        <Arrow />
        <Thumb />
        <Arrow $down />
      </Scrollbar>
    </Page>
  );
}
